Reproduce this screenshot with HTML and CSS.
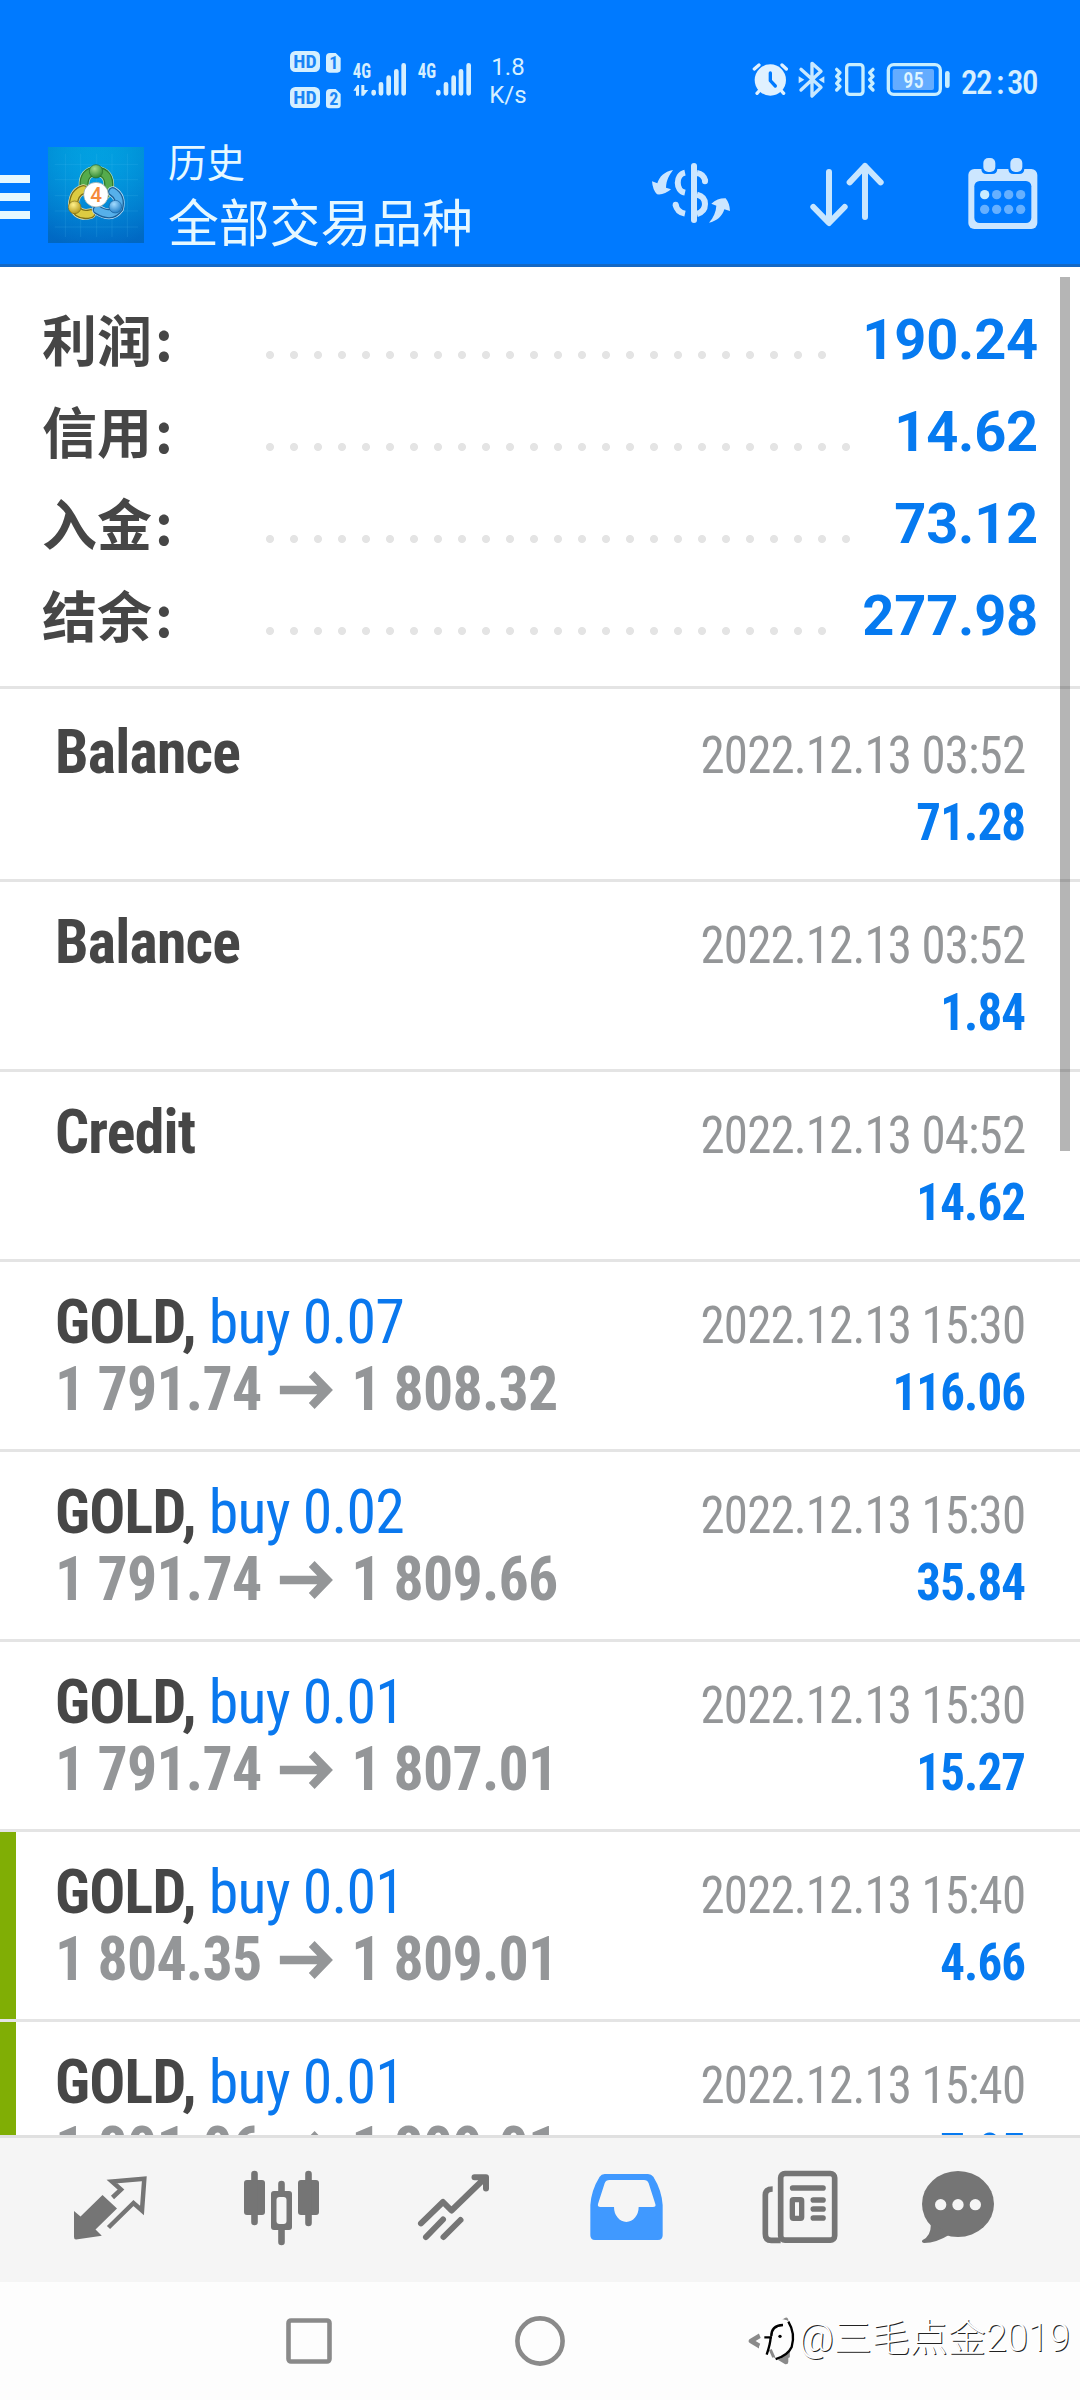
FILE: index.html
```
<!DOCTYPE html>
<html lang="zh-CN">
<head>
<meta charset="utf-8">
<title>历史</title>
<link rel="stylesheet" href="styles.css">
</head>
<body>
<div class="status">
  <svg class="network" viewBox="30 0 600 240">
    <g fill="#d5efff">
      <rect x="60" y="33" width="90" height="63" rx="16"/>
      <rect x="60" y="141" width="90" height="63" rx="16"/>
      <path d="M180 39H197L212 54V88Q212 98 202 98H178Q168 98 168 88V51Q168 39 180 39Z"/>
      <path d="M180 147H197L212 162V195Q212 205 202 205H178Q168 205 168 195V159Q168 147 180 147Z"/>
      <path d="M250 152L262 135H267V167H258V152ZM274 135H283V150H295L281 167H274Z"/>
    </g>
    <g class="badge-text">
      <text x="70" y="84" textLength="70" lengthAdjust="spacingAndGlyphs">HD</text>
      <text x="70" y="192" textLength="70" lengthAdjust="spacingAndGlyphs">HD</text>
      <text x="178" y="88">1</text>
      <text x="178" y="195">2</text>
    </g>
    <g class="net-text">
      <text x="248" y="114" textLength="55" lengthAdjust="spacingAndGlyphs">4G</text>
      <text x="443" y="114" textLength="55" lengthAdjust="spacingAndGlyphs">4G</text>
    </g>
    <g stroke="#d5efff" stroke-width="14" stroke-linecap="round">
      <path d="M311 156V160M333 133V160M356 113V160M379 94V160M401 76V160"/>
      <path d="M505 156V160M528 133V160M551 113V160M573 94V160M596 76V160"/>
    </g>
  </svg>
  <div class="speed"><span>1.8</span><span>K/s</span></div>
  <div class="system">
    <svg class="alarm" viewBox="30 0 120 240" fill="none" stroke="#e0f1ff" stroke-linecap="round">
      <circle cx="91" cy="120" r="47" fill="#e0f1ff" stroke="none"/>
      <path d="M43 87L57 75M139 87L126 75M51 160L60 150M131 160L122 150" stroke-width="10"/>
      <path d="M91 99V122L106 138" stroke="#007aff" stroke-width="10" stroke-linejoin="round"/>
    </svg>
    <svg class="bluetooth" viewBox="160 0 110 240" fill="none" stroke="#c8e8ff" stroke-width="10" stroke-linejoin="round" stroke-linecap="round">
      <path d="M184 88L244 142L217 168V70L244 94L184 150"/>
      <path d="M177 109L194 119L177 130ZM254 109L237 119L254 130Z" fill="#c8e8ff" stroke="none"/>
    </svg>
    <svg class="vibrate" viewBox="270 0 150 240" fill="none" stroke="#c8eeff" stroke-width="10" stroke-linejoin="round" stroke-linecap="round">
      <rect x="320" y="74" width="49" height="89" rx="9"/>
      <path d="M290 88L300 98L290 109L300 119L290 130L300 140L290 150M399 88L389 98L399 109L389 119L399 130L389 140L399 150"/>
    </svg>
    <svg class="battery" viewBox="430 0 210 240">
      <rect x="446" y="74" width="156" height="89" rx="16" fill="none" stroke="#c8eeff" stroke-width="10"/>
      <rect x="459" y="87" width="124" height="63" rx="6" fill="#64acff"/>
      <rect x="616" y="93" width="14" height="51" rx="7" fill="#c8eeff"/>
      <text class="battery-text" x="491" y="144" textLength="61" lengthAdjust="spacingAndGlyphs">95</text>
    </svg>
    <span class="clock">22<i>:</i>30</span>
  </div>
</div>

<header class="header">
  <div class="menu"><b></b><b></b><b></b></div>
  <svg class="logo" viewBox="0 0 288 288">
    <defs>
      <linearGradient id="sky" x1="0" y1="0" x2="0" y2="1"><stop offset="0" stop-color="#00b4ec"/><stop offset="1" stop-color="#0070cc"/></linearGradient>
      <radialGradient id="glow" cx=".5" cy=".4" r=".7"><stop offset="0" stop-color="#0a9be0" stop-opacity=".2"/><stop offset="1" stop-color="#005cb8" stop-opacity=".45"/></radialGradient>
      <radialGradient id="gg" cx=".4" cy=".3" r=".7"><stop offset="0" stop-color="#a8dc8c"/><stop offset="1" stop-color="#2f8a34"/></radialGradient>
      <radialGradient id="gy" cx=".4" cy=".3" r=".7"><stop offset="0" stop-color="#fff08a"/><stop offset="1" stop-color="#b59a1c"/></radialGradient>
      <radialGradient id="gb" cx=".4" cy=".3" r=".7"><stop offset="0" stop-color="#a4dcff"/><stop offset="1" stop-color="#2280c8"/></radialGradient>
    </defs>
    <rect width="288" height="288" fill="url(#sky)"/>
    <rect width="288" height="288" fill="url(#glow)"/>
    <path d="M52 20V270M98 20V270M146 20V270M192 20V270M238 20V270M20 52H270M20 98H270M20 146H270M20 192H270M20 240H270" stroke="#5cc4f4" stroke-opacity=".25" stroke-width="2"/>
    <g fill="none" stroke-linecap="round">
      <path d="M108 118Q106 74 145 72Q186 76 182 122Q178 138 166 146" stroke="#c8e6b8" stroke-width="32"/>
      <path d="M108 118Q106 74 145 72Q186 76 182 122Q178 138 166 146" stroke="#2f7a2c" stroke-width="28"/>
      <path d="M108 118Q106 74 145 72Q186 76 182 122Q178 138 166 146" stroke="#55ab4c" stroke-width="20"/>
      <path d="M106 128Q78 136 76 174Q90 210 128 200" stroke="#e8e4b0" stroke-width="32"/>
      <path d="M106 128Q78 136 76 174Q90 210 128 200" stroke="#7c7018" stroke-width="28"/>
      <path d="M106 128Q78 136 76 174Q90 210 128 200" stroke="#dccb42" stroke-width="20"/>
      <path d="M194 134Q220 150 212 184Q190 214 148 188" stroke="#bfe2fa" stroke-width="32"/>
      <path d="M194 134Q220 150 212 184Q190 214 148 188" stroke="#1b6098" stroke-width="28"/>
      <path d="M194 134Q220 150 212 184Q190 214 148 188" stroke="#56b0ea" stroke-width="20"/>
    </g>
    <circle cx="144" cy="73" r="20" fill="url(#gg)" stroke="#2b6a2a" stroke-width="2"/>
    <circle cx="80" cy="181" r="19" fill="url(#gy)" stroke="#7a6a18" stroke-width="2"/>
    <circle cx="202" cy="179" r="19" fill="url(#gb)" stroke="#1b5f9a" stroke-width="2"/>
    <circle cx="144" cy="143" r="37" fill="#fff" stroke="#8aa0a0" stroke-width="2"/>
    <text class="logo-text" x="144" y="165" text-anchor="middle">4</text>
  </svg>
  <div class="titles"><span class="title">历史</span><span class="subtitle">全部交易品种</span></div>
  <div class="actions">
    <svg viewBox="90 81 240 240">
      <g fill="none" stroke="#cce6ff" stroke-width="18">
        <path d="M192 128C163 134 163 182 192 188M228 194Q252 200 252 222Q252 245 228 252"/>
        <path d="M219 108V270" stroke-linecap="round"/>
        <path d="M164 224Q168 246 192 251M253 153Q248 132 228 129" />
        <path d="M164 224V225M252 153V154" stroke-linecap="round"/>
      </g>
      <path fill="#cce6ff" d="M156 120C130 125 115 140 109 160L93 154Q95 180 108 193Q130 196 150 178L135 173C136 150 145 135 156 120ZM264 278C278 262 285 245 286 227L271 221Q290 204 314 205Q326 220 327 243L310 238C304 258 288 274 264 278Z"/>
    </svg>
    <svg viewBox="558 81 240 240" fill="none" stroke="#c8e6ff" stroke-width="18" stroke-linecap="round" stroke-linejoin="round">
      <path d="M624 126V278M577 231L624 279L671 231M732 261V108M686 157L732 108L779 157"/>
    </svg>
    <svg viewBox="1028 81 240 240">
      <rect x="1044" y="117" width="207" height="180" rx="18" fill="#cce6ff"/>
      <rect x="1062" y="153" width="171" height="126" rx="16" fill="#007aff"/>
      <path d="M1083 112V116Q1083 132 1099 132H1115Q1131 132 1131 116V112ZM1164 112V116Q1164 132 1180 132H1196Q1212 132 1212 116V112Z" fill="#007aff"/>
      <rect x="1089" y="84" width="36" height="42" rx="15" fill="#cce6ff"/>
      <rect x="1170" y="84" width="36" height="42" rx="15" fill="#cce6ff"/>
      <g fill="#66b0ff"><circle cx="1129" cy="194" r="14"/><circle cx="1165" cy="194" r="14"/><circle cx="1201" cy="194" r="14"/><circle cx="1093" cy="238" r="14"/><circle cx="1129" cy="238" r="14"/><circle cx="1165" cy="238" r="14"/><circle cx="1201" cy="238" r="14"/></g>
      <circle cx="1093" cy="194" r="14" fill="#c8ecff"/>
    </svg>
  </div>
</header>

<main class="content">
  <section class="summary">
    <div class="total"><span class="label">利润<i>:</i></span><span class="dots"></span><span class="value">190.24</span></div>
    <div class="total"><span class="label">信用<i>:</i></span><span class="dots wide"></span><span class="value">14.62</span></div>
    <div class="total"><span class="label">入金<i>:</i></span><span class="dots wide"></span><span class="value">73.12</span></div>
    <div class="total"><span class="label">结余<i>:</i></span><span class="dots"></span><span class="value">277.98</span></div>
  </section>
  <section class="deals">
    <div class="deal first"><span class="name">Balance</span><span class="date">2022.12.13 03:52</span><span class="prices"></span><span class="amount">71.28</span></div>
    <div class="deal"><span class="name">Balance</span><span class="date">2022.12.13 03:52</span><span class="prices"></span><span class="amount">1.84</span></div>
    <div class="deal"><span class="name">Credit</span><span class="date">2022.12.13 04:52</span><span class="prices"></span><span class="amount">14.62</span></div>
    <div class="deal"><span class="name">GOLD, <em>buy 0.07</em></span><span class="date">2022.12.13 15:30</span><span class="prices">1 791.74 <svg class="arrow" viewBox="0 0 56 40"><path d="M0 20H48M33 4L49 20L33 36"/></svg> 1 808.32</span><span class="amount">116.06</span></div>
    <div class="deal"><span class="name">GOLD, <em>buy 0.02</em></span><span class="date">2022.12.13 15:30</span><span class="prices">1 791.74 <svg class="arrow" viewBox="0 0 56 40"><path d="M0 20H48M33 4L49 20L33 36"/></svg> 1 809.66</span><span class="amount">35.84</span></div>
    <div class="deal"><span class="name">GOLD, <em>buy 0.01</em></span><span class="date">2022.12.13 15:30</span><span class="prices">1 791.74 <svg class="arrow" viewBox="0 0 56 40"><path d="M0 20H48M33 4L49 20L33 36"/></svg> 1 807.01</span><span class="amount">15.27</span></div>
    <div class="deal marked"><span class="name">GOLD, <em>buy 0.01</em></span><span class="date">2022.12.13 15:40</span><span class="prices">1 804.35 <svg class="arrow" viewBox="0 0 56 40"><path d="M0 20H48M33 4L49 20L33 36"/></svg> 1 809.01</span><span class="amount">4.66</span></div>
    <div class="deal marked"><span class="name">GOLD, <em>buy 0.01</em></span><span class="date">2022.12.13 15:40</span><span class="prices">1 801.06 <svg class="arrow" viewBox="0 0 56 40"><path d="M0 20H48M33 4L49 20L33 36"/></svg> 1 809.01</span><span class="amount">7.95</span></div>
  </section>
  <div class="scrollbar"></div>
</main>

<nav class="tabs">
  <svg viewBox="62 2162 96 96">
    <path d="M76 2239.5Q74 2239.5 74 2237V2211L80.5 2216.5L102.5 2195L117 2208.5L95.5 2229.5L101.8 2235.7Z" fill="#757575"/>
    <path d="M112.5 2197.5L121 2189.5L112 2181.5L144.3 2178.8L142 2210.5L133.5 2203L108.5 2227.5" fill="none" stroke="#757575" stroke-width="4.5"/>
  </svg>
  <svg viewBox="234 2162 96 96">
    <g fill="#757575"><rect x="244" y="2180" width="21" height="35" rx="3"/><rect x="298" y="2180" width="21" height="35" rx="3"/><rect x="271" y="2191" width="21" height="39" rx="3"/></g>
    <path d="M254.5 2174V2222M308.5 2174V2223M281.5 2184V2242" stroke="#757575" stroke-width="6.6" stroke-linecap="round"/>
    <rect x="276.5" y="2197" width="10" height="27" rx="3" fill="#f5f5f5"/>
  </svg>
  <svg viewBox="406 2162 96 96" fill="none" stroke="#757575" stroke-width="6" stroke-linecap="round" stroke-linejoin="round">
    <path d="M421 2223.3L443 2202L451.5 2210.5L485.5 2177.5M474.5 2177.2H486V2188.5M426 2237L443 2219.5M443.5 2237L460.5 2220"/>
  </svg>
  <svg viewBox="54 606 288 288">
    <path fill="#4099ff" fill-rule="evenodd" d="M134 642H264Q274 642 280 650Q305 690 308 735V826Q308 840 294 840H105Q91 840 91 826V735Q94 690 119 650Q124 642 134 642ZM148 660Q138 660 134 670L114 732Q112 741 121 741H162A37 45 0 0 0 236 741H279Q289 741 286 732L266 670Q262 660 252 660Z"/>
  </svg>
  <svg viewBox="570 606 288 288" fill="none" stroke="#757575" stroke-width="17" stroke-linecap="round">
    <rect x="662" y="640.5" width="162" height="200" rx="13"/>
    <path d="M638 687Q616 687 616 705V821Q616 841 634 841H662" stroke-linecap="butt"/>
    <path d="M698 684H789M760 720H789M760 747H789M760 774H789"/>
    <rect x="697" y="719" width="28" height="56" rx="3" stroke-width="16"/>
  </svg>
  <svg viewBox="1086 606 288 288">
    <ellipse cx="1194" cy="732" rx="108" ry="99" fill="#757575"/>
    <path d="M1112 785Q1116 826 1088 840Q1082 846 1092 849Q1130 848 1168 824Z" fill="#757575"/>
    <g fill="#f5f5f5"><circle cx="1142" cy="734" r="17"/><circle cx="1194" cy="734" r="17"/><circle cx="1246" cy="734" r="17"/></g>
  </svg>
</nav>

<footer class="navbar">
  <svg viewBox="0 0 50 50"><rect x="4.5" y="4.5" width="41" height="41" rx="2.5"/></svg>
  <svg viewBox="0 0 50 50"><circle cx="25" cy="25" r="22.6"/></svg>
  <svg viewBox="0 0 50 50"><path d="M5 25L40 4V46Z" stroke-linejoin="round"/></svg>
  <div class="watermark">
    <svg viewBox="84 54 114 140" fill="none">
      <path d="M78 96L112 76Q135 60 168 70Q196 90 191 135Q184 170 138 190L130 176L112 186L78 164L92 130Z" fill="#fdfdfd"/>
      <path d="M118 158L128 180M152 186L172 178V164" stroke="#8a8a8a" stroke-width="9"/>
      <path d="M100 121H123M121 118Q120 86 156 84M119 121Q118 140 107 173M172 74Q194 110 182 150Q170 176 134 186" stroke="#000" stroke-width="7"/>
      <circle cx="147" cy="118" r="5" fill="#000"/>
    </svg>
    <span>@三毛点金2019</span>
  </div>
</footer>
</body>
</html>
```
FILE: styles.css
```
* { box-sizing: border-box; }
body {
  margin: 0;
  width: 1080px;
  height: 2400px;
  overflow: hidden;
  display: flex;
  flex-direction: column;
  background: #fff;
  font-family: Roboto, "Noto Sans CJK SC", sans-serif;
}
svg { display: block; flex: none; }

/* system status bar */
.status {
  flex: none;
  height: 130px;
  padding: 40px 43px 0 280px;
  display: flex;
  background: #007aff;
  color: #d5efff;
}
.network { width: 200px; height: 80px; }
.badge-text { font: 700 54px "Roboto Condensed", Roboto, sans-serif; fill: #1a84f5; }
.net-text { font: 700 58px "Roboto Condensed", Roboto, sans-serif; fill: #d5efff; }
.speed {
  width: 56px;
  padding-top: 13px;
  display: flex;
  flex-direction: column;
  align-items: center;
  font-size: 24px;
  line-height: 28px;
}
.system { margin-left: auto; display: flex; }
.system svg { height: 80px; }
.alarm { width: 40px; }
.bluetooth { width: 36.67px; margin-left: 3.33px; }
.vibrate { width: 50px; }
.battery { width: 70px; margin-left: 3.33px; }
.battery-text { font: 500 64px "Roboto Condensed", Roboto, sans-serif; fill: #e0f6ff; }
.clock {
  margin-left: 8px;
  font: 500 33px/86px "Roboto Condensed", Roboto, sans-serif;
  letter-spacing: -1.5px;
}
.clock i { font-style: normal; margin: 0 4px 0 5px; }

/* application header */
.header {
  flex: none;
  height: 137px;
  padding-right: 37px;
  display: flex;
  align-items: center;
  background: #007aff;
  border-bottom: 3px solid #1468c4;
  color: #e6f8ff;
}
.menu { width: 30px; display: flex; flex-direction: column; gap: 10px; }
.menu b { height: 8px; background: #e6f8ff; }
.logo { width: 96px; height: 96px; margin: -4px 0 0 18px; }
.logo-text { font: 500 62px Roboto, sans-serif; fill: #f58a3c; }
.titles {
  margin: -4px 0 0 24px;
  display: flex;
  flex-direction: column;
  font-family: "Noto Sans CJK SC", sans-serif;
}
.title { font-size: 38.5px; line-height: 50px; }
.subtitle { font-size: 50.8px; line-height: 70px; }
.actions { margin-left: auto; display: flex; gap: 76px; }
.actions svg { width: 80px; height: 80px; }

/* account totals */
.content { flex: 1; min-height: 0; overflow: hidden; position: relative; }
.summary { padding: 27px 42px 24px 42px; border-bottom: 3px solid #e4e4e4; }
.total { height: 92px; line-height: 92px; display: flex; }
.label {
  width: 215.5px;
  font: 700 55px/86px "Noto Sans CJK SC", sans-serif;
  color: #464646;
}
.label i { font-style: normal; margin-left: 3px; }
.dots {
  width: 576px;
  height: 8px;
  margin-top: 57px;
  background: radial-gradient(circle, #e4e4e4 3.6px, transparent 4.4px) 0 0 / 24px 8px repeat-x;
}
.dots.wide { width: 600px; }
.value {
  margin-left: auto;
  font-size: 56px;
  font-weight: 700;
  letter-spacing: -.2px;
  color: #067af0;
}

/* deal list */
.deal {
  height: 190px;
  padding: 26px 55px 0 54.5px;
  border-bottom: 3px solid #e4e4e4;
  display: grid;
  grid-template-columns: auto auto;
  grid-template-rows: 67px 67px;
  justify-content: space-between;
  align-items: baseline;
  font-family: "Roboto Condensed", Roboto, sans-serif;
  font-size: 62px;
  line-height: 67px;
  letter-spacing: -.8px;
  white-space: nowrap;
}
.deal.first { height: 193px; padding-top: 29px; }
.deal.marked { background: linear-gradient(#80ae05, #80ae05) 0 0 / 16px 100% no-repeat; }
.name, .prices { transform: scaleX(.965); transform-origin: left; }
.name { font-weight: 700; color: #464646; }
.name em { font-style: normal; font-weight: 400; color: #0a78ee; }
.prices { font-weight: 700; color: #949698; }
.prices::before { content: "\200b"; letter-spacing: 0; }
.arrow {
  display: inline-block;
  width: 58px;
  height: 40px;
  margin: 0 3px 0 5px;
  vertical-align: 0;
  fill: none;
  stroke: #949698;
  stroke-width: 8.5;
}
.date, .amount {
  font-size: 51px;
  letter-spacing: -.9px;
  text-align: right;
  transform: scaleX(.96);
  transform-origin: right;
}
.date { color: #949698; }
.amount { font-weight: 700; color: #067af0; }
.scrollbar {
  position: absolute;
  top: 10px;
  left: 1060px;
  width: 10px;
  height: 874px;
  background: rgba(0, 0, 0, .29);
}

/* bottom tabs */
.tabs {
  flex: none;
  height: 147px;
  padding: 0 24px;
  border-top: 3px solid #e0e0e0;
  background: #f5f5f5;
  display: grid;
  grid-template-columns: repeat(6, 172px);
  align-items: center;
  justify-items: center;
}
.tabs svg { width: 96px; height: 96px; }

/* system navigation */
.navbar {
  flex: none;
  position: relative;
  height: 118px;
  display: flex;
  align-items: center;
  justify-content: center;
  gap: 181px;
  background: #fdfdfd;
}
.navbar > svg { width: 50px; height: 50px; fill: none; stroke: #8a8a8a; stroke-width: 4.6; }
.watermark {
  position: absolute;
  top: 31px;
  right: 10px;
  display: flex;
  align-items: center;
}
.watermark svg { width: 38px; height: 46.7px; }
.watermark span {
  margin-left: 2px;
  font: 300 38px/50px Roboto, "Noto Sans CJK SC", sans-serif;
  color: #fff;
  text-shadow: 1px 1px 0 #222;
}
```
